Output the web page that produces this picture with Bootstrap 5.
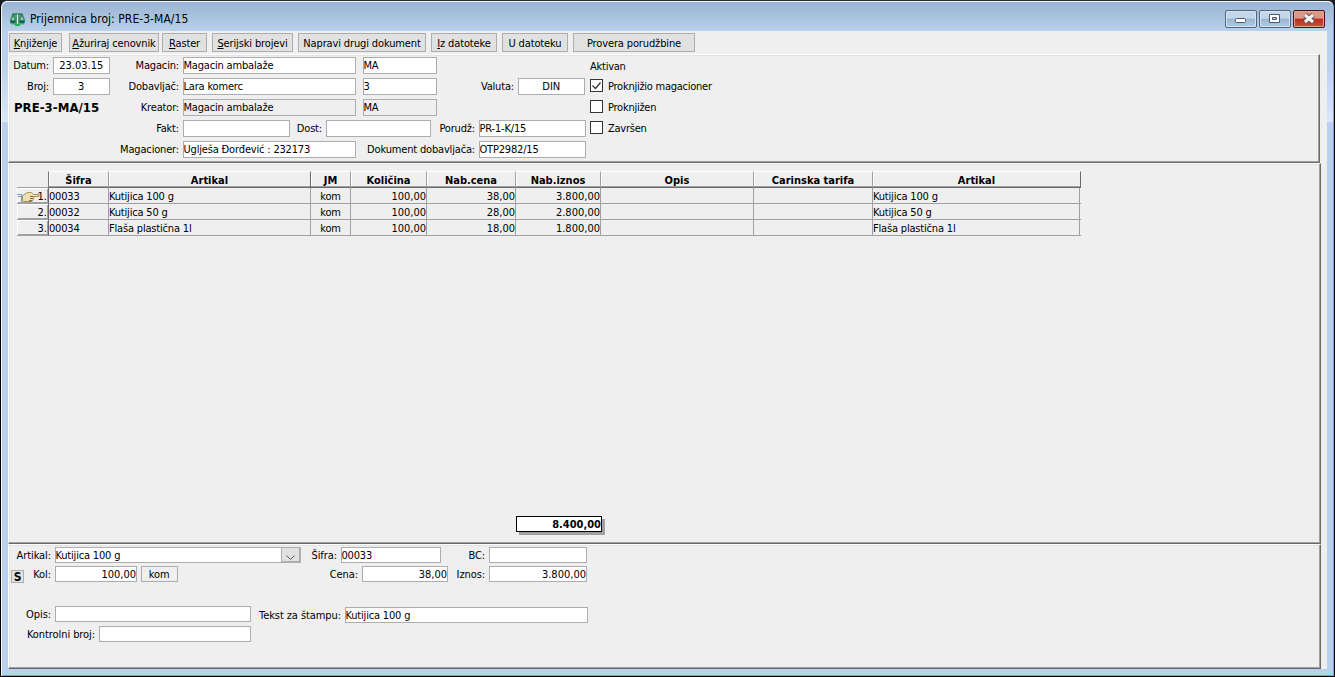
<!DOCTYPE html>
<html lang="sr-Latn">
<head>
  <meta charset="UTF-8" />
  <meta name="viewport" content="width=device-width, initial-scale=1.0"/>
  <title>Prijemnica broj: PRE-3-MA/15</title>
  <link href="https://cdn.jsdelivr.net/npm/bootstrap@5.3.0/dist/css/bootstrap.min.css" rel="stylesheet" />
  <style>
      html, body { height: 100%; overflow: hidden; }
      body { background: #1c1c20; color: #000; font: 11px/15px "DejaVu Sans Condensed", "DejaVu Sans", sans-serif; letter-spacing: -0.25px; }
      .win { height: 677px; width: 1335px; border: 1px solid #000; border-top-color: #2b2b30; border-radius: 7px 7px 0 0; background: linear-gradient(#b9d1ea 60px, #dbe7f5 121px, #b9d1ea 121px); box-shadow: inset 1px 1px 0 #f2f7fc, inset -1px -1px 0 #2ccbe0; padding: 0 7px 7px; }
      .titlebar { height: 30px; margin: 0 -6px; padding: 0 8px 0 7px; background: linear-gradient(#99b4d2, #b9d1ea); border-top: 1px solid #f2f7fc; border-radius: 6px 6px 0 0; }
      .titlebar .caption { font-size: 12px; letter-spacing: 0.05px; padding-top: 10px; margin-left: 4px; }
      .winbtn { width: 32px; height: 18px; margin: 8px 0 0 2px; border: 1px solid #54667f; border-radius: 2px; box-shadow: inset 0 0 0 1px #d5e3f2; background: linear-gradient(#c3d6ea 45%, #98b4d2 50%, #b4cde6); padding: 0; line-height: 0; }
      .winbtn.closer { border-color: #4a1119; box-shadow: inset 0 0 0 1px #e2a395; background: linear-gradient(#dc9785 45%, #b5301c 50%, #cb5238); }
      .client { background: #efefef; height: 638px; }
      .toolbar { height: 23px; padding: 2px 0 0 1px; }
      .tbtn { height: 19px; border: 1px solid #adadad; background: #e1e1e1; padding: 2px 0 0; text-align: center; line-height: 15px; letter-spacing: -0.13px; color: #000; white-space: nowrap; }
      .panel { width: 1313px; border: 1px solid #fff; border-right-color: #696969; border-bottom-color: #696969; box-shadow: inset -1px -1px 0 #a0a0a0, inset 1px 1px 0 #e3e3e3; }
      .head-panel { width: 1312px; height: 109px; padding: 2px 0 0 1px; }
      .grid-panel { height: 381px; padding: 7px 0 0 8px; }
      .edit-panel { height: 125px; padding: 2px 0 0 1px; }
      .frow { height: 21px; white-space: nowrap; }
      .erow { height: 19px; white-space: nowrap; }
      .lbl { text-align: right; padding-right: 4px; line-height: 17px; letter-spacing: -0.17px; flex: none; }
      .edit-panel .lbl { letter-spacing: -0.08px; }
      .fld { height: 17px; border: 1px solid #abadb3; background: #fff; line-height: 15px; letter-spacing: -0.18px; text-indent: -0.5px; flex: none; overflow: hidden; }
      .fld.text-end { letter-spacing: 0; }
      .fld.text-center { letter-spacing: 0; }
      .erow .fld { height: 16px; line-height: 15px; }
      .fld.off, .fld.unit { background: #efefef; }
      .chk { width: 13px; height: 13px; border: 1px solid #333; background: #fff; margin: 1px 5px 0 0; flex: none; line-height: 0; }
      .chk + div { line-height: 17px; }
      .docno { font: bold 13px/17px "DejaVu Sans Condensed", sans-serif; letter-spacing: 0.05px; padding-left: 4px; }
      .sbtn { width: 13px; height: 13px; margin: 4px 0 0 1px; border: 1px solid #adadad; background: #e1e1e1; font-weight: bold; font-size: 12px; line-height: 12px; text-align: center; }
      .dropbtn { width: 20px; height: 16px; border: 2px solid #adadad; border-width: 1px 2px 2px 1px; background: #e1e1e1; line-height: 0; }
      .w57 { width: 57px; } .w173 { width: 173px; } .w74 { width: 74px; } .w67 { width: 67px; }
      .w107 { width: 107px; } .w105 { width: 105px; } .w43 { width: 43px; } .w73 { width: 73px; }
      .w81 { width: 81px; } .w100 { width: 100px; } .w36 { width: 36px; } .w48 { width: 48px; }
      .w123 { width: 123px; } .w45 { width: 45px; } .w227 { width: 227px; } .w40 { width: 40px; }
      .w98 { width: 98px; } .w31 { width: 31px; } .w82 { width: 82px; } .w37 { width: 37px; }
      .w184 { width: 184px; } .w86 { width: 86px; } .w41 { width: 41px; } .w196 { width: 196px; }
      .w94 { width: 94px; } .w243 { width: 243px; } .w89 { width: 89px; } .w152 { width: 152px; }
      .items { width: 1064px; table-layout: fixed; border-collapse: separate; border-spacing: 0; }
      .items th { height: 17px; padding: 1px 0 0; text-align: center; line-height: 13px; letter-spacing: 0; border: 0; border-top: 1px solid #fff; border-right: 1px solid #a0a0a0; border-bottom: 1px solid #696969; box-shadow: inset 0 -1px 0 #a0a0a0, inset 1px 0 0 #fff; }
      .items th:first-child { border-top-color: transparent; border-bottom: 1px solid #a0a0a0; border-right-color: #777; box-shadow: none; }
      .items th:nth-child(3), .items th:last-child { border-right: 1px solid #696969; }
      .items td { height: 16px; padding: 2px 0 0; line-height: 13px; letter-spacing: -0.18px; border: 0; border-right: 1px solid #a0a0a0; border-bottom: 1px solid #a0a0a0; white-space: nowrap; }
      .items td:last-child { border-right: 0; box-shadow: inset -1px 0 0 #efefef, inset -2px 0 0 #a0a0a0; }
      .items td:first-child { border-right: 1px solid #696969; box-shadow: inset 1px 1px 0 #fff, inset -1px -1px 0 #a0a0a0; padding-right: 1px; letter-spacing: 0; }
      .items td.num { text-align: right; letter-spacing: 0; }
      .items .hand { margin-top: -1px; flex: none; }
      .total { width: 86px; height: 16px; margin: 280px 0 0 499px; border: 1px solid #000; background: #fff; box-shadow: 3px 3px 0 #a0a0a0; font-weight: bold; text-align: right; letter-spacing: 0; line-height: 15px; }
  </style>
</head>
<body>
  <div class="win">
    <!-- Title bar -->
    <div class="titlebar d-flex">
      <svg width="17" height="15" viewBox="0 0 17 15" style="margin-top:10px">
        <path d="M3.500 1h10l2.500 7v3l-2 1.500H3L1 11V8z" fill="#4f9c7c" />
        <path d="M8.500 1v11M3 2.500h11M4 3L1.500 8.500h5zM13 3l-2.500 5.500h5z" stroke="#2a7c5f" fill="#9ccdb6" />
        <path d="M1 9h6l-1 2H2zM10 9h6l-1 2h-4z" fill="#176a4c" />
        <path d="M8.500 2v10" stroke="#d8efe2" />
        <path d="M6 12h5v2H6z" fill="#18b34b" />
      </svg>
      <div class="caption">Prijemnica broj: PRE-3-MA/15</div>
      <div class="d-flex ms-auto">
        <div class="winbtn"><svg width="30" height="16"><rect x="9.500" y="7.500" width="10" height="4" rx="1" fill="#fff" stroke="#4c5668" /></svg></div>
        <div class="winbtn"><svg width="30" height="16"><path d="M9.500 3.500h10v8h-10zM12.500 6.500v2h4v-2z" fill="#fff" fill-rule="evenodd" stroke="#4c5668" /></svg></div>
        <div class="winbtn closer"><svg width="30" height="16"><path d="M11 4l8 7M19 4l-8 7" stroke="#5b4a58" stroke-width="5" /><path d="M11 4l8 7M19 4l-8 7" stroke="#f4f4f4" stroke-width="3" /></svg></div>
      </div>
    </div>

    <div class="client">
      <div class="toolbar d-flex">
        <div class="tbtn" style="width:53px"><u>K</u>njiženje</div>
        <div class="tbtn" style="width:90px;margin-left:7px"><u>A</u>žuriraj cenovnik</div>
        <div class="tbtn" style="width:45px;margin-left:3px"><u>R</u>aster</div>
        <div class="tbtn" style="width:81px;margin-left:5px"><u>S</u>erijski brojevi</div>
        <div class="tbtn" style="width:128px;margin-left:5px">Napravi drugi dokument</div>
        <div class="tbtn" style="width:66px;margin-left:5px"><u>I</u>z datoteke</div>
        <div class="tbtn" style="width:66px;margin-left:5px">U datoteku</div>
        <div class="tbtn" style="width:122px;margin-left:5px">Provera porudžbine</div>
      </div>

      <!-- Document header -->
      <div class="panel head-panel">
        <div class="frow d-flex">
          <div class="lbl w43">Datum:</div><div class="fld w57 text-center">23.03.15</div>
          <div class="lbl w73">Magacin:</div><div class="fld w173">Magacin ambalaže</div>
          <div class="fld w74" style="margin-left:7px">MA</div>
          <div style="margin:2px 0 0 153px">Aktivan</div>
        </div>
        <div class="frow d-flex">
          <div class="lbl w43">Broj:</div><div class="fld w57 text-center">3</div>
          <div class="lbl w73">Dobavljač:</div><div class="fld w173">Lara komerc</div>
          <div class="fld w74" style="margin-left:7px">3</div>
          <div class="lbl w81">Valuta:</div><div class="fld w67 text-center">DIN</div>
          <div class="chk" style="margin-left:5px"><svg width="11" height="11"><path d="M1.500 5.500l3 3 5-6" fill="none" stroke="#333" stroke-width="1.300" /></svg></div>
          <div>Proknjižio magacioner</div>
        </div>
        <div class="frow d-flex">
          <div class="docno w100">PRE-3-MA/15</div>
          <div class="lbl w73">Kreator:</div><div class="fld off w173">Magacin ambalaže</div>
          <div class="fld off w74" style="margin-left:7px">MA</div>
          <div class="chk" style="margin-left:153px"></div>
          <div>Proknjižen</div>
        </div>
        <div class="frow d-flex">
          <div class="lbl w173">Fakt:</div><div class="fld w107">&nbsp;</div>
          <div class="lbl w36">Dost:</div><div class="fld w105">&nbsp;</div>
          <div class="lbl w48">Porudž:</div><div class="fld w107">PR-1-K/15</div>
          <div class="chk" style="margin-left:4px"></div>
          <div>Završen</div>
        </div>
        <div class="frow d-flex">
          <div class="lbl w173">Magacioner:</div><div class="fld w173">Uglješa Đorđević : 232173</div>
          <div class="lbl w123">Dokument dobavljača:</div><div class="fld w107">OTP2982/15</div>
        </div>
      </div>

      <!-- Items -->
      <div class="panel grid-panel">
        <table class="items">
          <colgroup>
            <col style="width:32px"><col style="width:60px"><col style="width:202px"><col style="width:40px"><col style="width:76px">
            <col style="width:89px"><col style="width:85px"><col style="width:153px"><col style="width:119px"><col style="width:208px">
          </colgroup>
          <thead>
            <tr><th></th><th>Šifra</th><th>Artikal</th><th>JM</th><th>Količina</th><th>Nab.cena</th><th>Nab.iznos</th><th>Opis</th><th>Carinska tarifa</th><th>Artikal</th></tr>
          </thead>
          <tbody>
            <tr>
              <td><div class="d-flex justify-content-between" style="height:13px"><svg class="hand" width="23" height="14" viewBox="0 0 23 14"><path d="M0 5.500h5M1 7.500h4M4.500 6v7" stroke="#7f9fc0" fill="none" /><path d="M5.500 12V6.500l5-3h4l2 2h5.500v2h-6l1 2-2 3H7z" fill="#ecdfb4" stroke="#ab9058" /><path d="M13 7.500h3M13 9.500h3M12 11.500h3" stroke="#8a7040" /></svg><span style="margin-left:-4px">1.</span></div></td>
              <td>00033</td><td>Kutijica 100 g</td><td class="text-center">kom</td><td class="num">100,00</td><td class="num">38,00</td><td class="num">3.800,00</td><td></td><td></td><td>Kutijica 100 g</td>
            </tr>
            <tr><td class="num">2.</td><td>00032</td><td>Kutijica 50 g</td><td class="text-center">kom</td><td class="num">100,00</td><td class="num">28,00</td><td class="num">2.800,00</td><td></td><td></td><td>Kutijica 50 g</td></tr>
            <tr><td class="num">3.</td><td>00034</td><td>Flaša plastična 1l</td><td class="text-center">kom</td><td class="num">100,00</td><td class="num">18,00</td><td class="num">1.800,00</td><td></td><td></td><td>Flaša plastična 1l</td></tr>
          </tbody>
        </table>
        <div class="total">8.400,00</div>
      </div>

      <!-- Current item -->
      <div class="panel edit-panel">
        <div class="erow d-flex">
          <div class="lbl w45">Artikal:</div><div class="fld w227">Kutijica 100 g</div>
          <div class="dropbtn" style="margin-left:-1px"><svg width="17" height="13"><path d="M4.500 7.500l4 4 4-4" fill="none" stroke="#555" /></svg></div>
          <div class="lbl w40">Šifra:</div><div class="fld w100">00033</div>
          <div class="lbl w48">BC:</div><div class="fld w98">&nbsp;</div>
        </div>
        <div class="erow d-flex">
          <div class="sbtn">S</div>
          <div class="lbl w31">Kol:</div><div class="fld w82 text-end">100,00</div>
          <div class="fld unit w37 text-center" style="margin-left:4px">kom</div>
          <div class="lbl w184">Cena:</div><div class="fld w86 text-end">38,00</div>
          <div class="lbl w41">Iznos:</div><div class="fld w98 text-end">3.800,00</div>
        </div>
        <div class="erow d-flex" style="margin-top:21px;height:20px">
          <div class="lbl w45">Opis:</div><div class="fld w196">&nbsp;</div>
          <div class="lbl w94" style="margin-top:1px">Tekst za štampu:</div><div class="fld w243" style="margin-top:1px">Kutijica 100 g</div>
        </div>
        <div class="erow d-flex">
          <div class="lbl w89">Kontrolni broj:</div><div class="fld w152">&nbsp;</div>
        </div>
      </div>
    </div>
  </div>
  <script src="https://cdn.jsdelivr.net/npm/bootstrap@5.3.0/dist/js/bootstrap.bundle.min.js"></script>
</body>
</html>
